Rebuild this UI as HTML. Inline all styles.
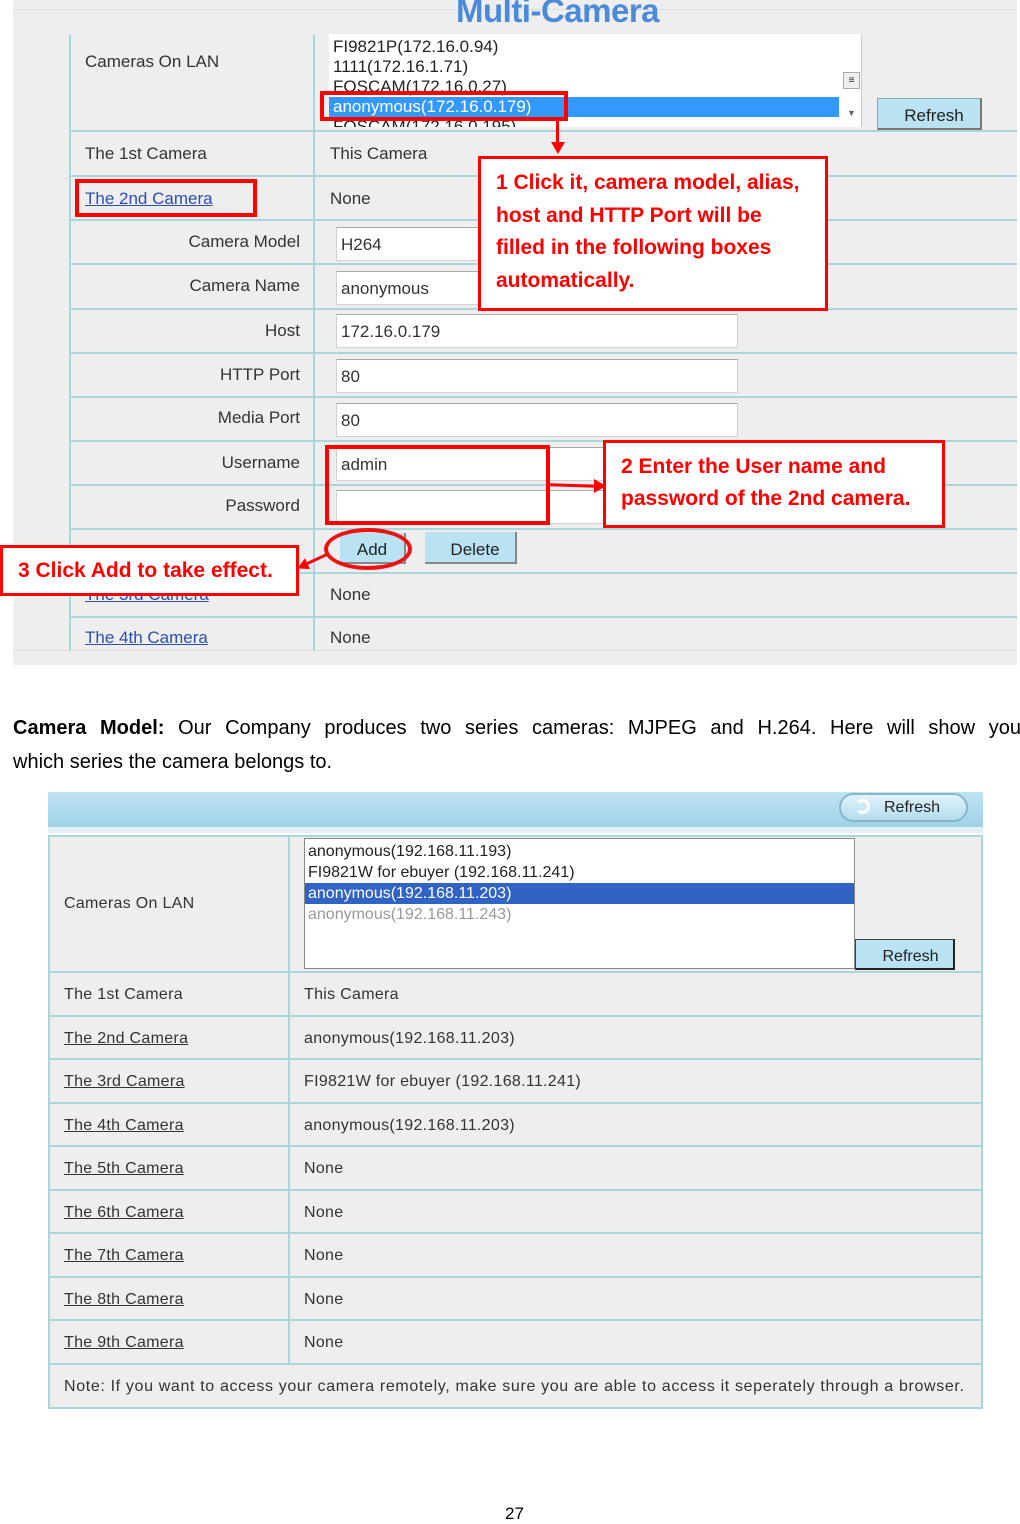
<!DOCTYPE html>
<html><head><meta charset="utf-8"><style>
*{margin:0;padding:0;box-sizing:border-box}
body{width:1020px;height:1521px;background:#fff;position:relative;overflow:hidden;font-family:"Liberation Sans",sans-serif;color:#222}
.a{position:absolute;white-space:nowrap}
.h{position:absolute;height:2px;background:#a9d5dd}
.v{position:absolute;width:2px;background:#a9d5dd}
.t{font-size:17px;color:#333}
.lk{color:#2a4fb0;text-decoration:underline}
.in{position:absolute;background:#fff;border:1px solid #d0d0d0;border-top-color:#aaa;height:34px;font-size:17px;padding:7px 4px;color:#333}
.rb{position:absolute;border:3px solid #f00;background:#fff;color:#f00;font-weight:bold;font-size:21px;line-height:32px;white-space:nowrap}
.t2{font-size:16px;color:#333;letter-spacing:0.3px}
</style></head><body>
<div class="a" style="left:13px;top:0;width:1004px;height:665px;background:#eeeeee"></div>
<div class="a" style="left:13px;top:9px;width:1004px;height:1px;background:#ddd"></div>
<div class="a" style="left:13px;top:650px;width:1004px;height:1px;background:#ddd"></div>
<div class="a" style="left:456px;top:-8px;font-size:33px;font-weight:bold;color:#4a8ad8;letter-spacing:-0.5px">Multi-Camera</div>
<div class="v" style="left:69px;top:35px;height:615px"></div>
<div class="v" style="left:313px;top:35px;height:615px"></div>
<div class="h" style="left:70px;top:130px;width:947px"></div>
<div class="h" style="left:70px;top:175px;width:947px"></div>
<div class="h" style="left:70px;top:219px;width:947px"></div>
<div class="h" style="left:70px;top:263px;width:947px"></div>
<div class="h" style="left:70px;top:308px;width:947px"></div>
<div class="h" style="left:70px;top:352px;width:947px"></div>
<div class="h" style="left:70px;top:396px;width:947px"></div>
<div class="h" style="left:70px;top:440px;width:947px"></div>
<div class="h" style="left:70px;top:484px;width:947px"></div>
<div class="h" style="left:70px;top:528px;width:947px"></div>
<div class="h" style="left:70px;top:572px;width:947px"></div>
<div class="h" style="left:70px;top:616px;width:947px"></div>
<div class="a t" style="left:85px;top:52px">Cameras On LAN</div>
<div class="a" style="left:329px;top:34px;width:533px;height:93px;background:#fff;border-right:1px solid #ccc;overflow:hidden;font-size:17px;line-height:20px;color:#222">
 <div style="padding-left:4px;margin-top:3px">FI9821P(172.16.0.94)</div>
 <div style="padding-left:4px">1111(172.16.1.71)</div>
 <div style="padding-left:4px">FOSCAM(172.16.0.27)</div>
 <div style="padding-left:4px;background:#3399ff;color:#fff;width:510px">anonymous(172.16.0.179)</div>
 <div style="padding-left:4px">FOSCAM(172.16.0.195)</div>
</div>
<div class="a" style="left:843px;top:72px;width:17px;height:17px;border:1px solid #aaa;background:#eee;font-size:10px;text-align:center;line-height:15px">≡</div>
<div class="a" style="left:847px;top:108px;font-size:9px;color:#666">▼</div>
<div class="a" style="left:877px;top:98px;width:105px;height:32px;background:#b9e3f2;border:1px solid #8aa;border-right:2px solid #777;border-bottom:2px solid #777;font-size:17px;text-align:center;line-height:34px;padding-left:10px;color:#222">Refresh</div>
<div class="rb" style="left:320px;top:91px;width:248px;height:30px;background:none;border-width:4px"></div>
<div class="a" style="left:556px;top:120px;width:3px;height:26px;background:#f00"></div>
<div class="a" style="left:551px;top:142px;width:0;height:0;border-left:7px solid transparent;border-right:7px solid transparent;border-top:12px solid #f00"></div>

<div class="a t" style="left:85px;top:144px">The 1st Camera</div>
<div class="a t" style="left:330px;top:144px">This Camera</div>
<div class="a t lk" style="left:85px;top:189px">The 2nd Camera</div>
<div class="rb" style="left:75px;top:179px;width:182px;height:38px;background:none;border-width:4px"></div>
<div class="a t" style="left:330px;top:189px">None</div>
<div class="a t" style="right:720px;top:232px">Camera Model</div>
<div class="in" style="left:336px;top:227px;width:402px">H264</div>
<div class="a t" style="right:720px;top:276px">Camera Name</div>
<div class="in" style="left:336px;top:271px;width:402px">anonymous</div>
<div class="a t" style="right:720px;top:321px">Host</div>
<div class="in" style="left:336px;top:314px;width:402px">172.16.0.179</div>
<div class="a t" style="right:720px;top:365px">HTTP Port</div>
<div class="in" style="left:336px;top:359px;width:402px">80</div>
<div class="a t" style="right:720px;top:408px">Media Port</div>
<div class="in" style="left:336px;top:403px;width:402px">80</div>
<div class="a t" style="right:720px;top:453px">Username</div>
<div class="in" style="left:336px;top:447px;width:270px">admin</div>
<div class="a t" style="right:720px;top:496px">Password</div>
<div class="in" style="left:336px;top:490px;width:270px"></div>
<div class="rb" style="left:325px;top:445px;width:225px;height:80px;background:none;border-width:4px"></div>
<div class="a" style="left:550px;top:484px;width:46px;height:3px;background:#f00;transform:rotate(2deg)"></div>
<div class="a" style="left:594px;top:479px;width:0;height:0;border-top:7px solid transparent;border-bottom:7px solid transparent;border-left:12px solid #f00"></div>
<div class="a" style="left:340px;top:533px;width:66px;height:31px;background:#b9e3f2;border-right:2px solid #888;border-bottom:2px solid #888;font-size:17px;text-align:center;line-height:33px">Add</div>
<div class="a" style="left:324px;top:528px;width:88px;height:42px;border:4px solid #e11;border-radius:50%"></div>
<div class="a" style="left:425px;top:532px;width:92px;height:32px;background:#b9e3f2;border-right:2px solid #888;border-bottom:2px solid #888;font-size:17px;text-align:center;line-height:35px;padding-left:10px">Delete</div>
<div class="a t lk" style="left:85px;top:585px">The 3rd Camera</div>
<div class="a t" style="left:330px;top:585px">None</div>
<div class="a t lk" style="left:85px;top:628px">The 4th Camera</div>
<div class="a t" style="left:330px;top:628px">None</div>

<div class="rb" style="left:478px;top:156px;width:350px;height:155px;padding:8px 0 0 15px;line-height:32.5px">1 Click it, camera model, alias,<br>host and HTTP Port will be<br>filled in the following boxes<br>automatically.</div>
<div class="rb" style="left:603px;top:440px;width:342px;height:88px;padding:8px 0 0 15px">2 Enter the User name and<br>password of the 2nd camera.</div>
<div class="rb" style="left:0;top:545px;width:299px;height:51px;padding:7px 0 0 15px">3 Click Add to take effect.</div>
<div class="a" style="left:304px;top:558px;width:24px;height:3px;background:#f00;transform:rotate(-25deg)"></div>
<div class="a" style="left:297px;top:560px;width:0;height:0;border-top:6px solid transparent;border-bottom:6px solid transparent;border-right:11px solid #f00;transform:rotate(-25deg)"></div>

<div class="a" style="left:13px;top:711px;width:1008px;font-size:20px;line-height:34px;white-space:nowrap;text-align:justify;text-align-last:justify;color:#000"><b>Camera Model:</b> Our Company produces two series cameras: MJPEG and H.264. Here will show you</div>
<div class="a" style="left:13px;top:745px;font-size:20px;line-height:34px;color:#000">which series the camera belongs to.</div>

<div class="a" style="left:48px;top:792px;width:935px;height:35px;background:linear-gradient(#bfe4f2,#9fd2e8)"></div>
<div class="a" style="left:48px;top:827px;width:935px;height:6px;background:#e4eef5"></div>
<div class="a" style="left:839px;top:793px;width:129px;height:29px;border-radius:15px;border:2px solid #88b4cc;background:linear-gradient(#e0f2fa,#b4dcee);font-size:16px;line-height:25px;padding-left:43px;color:#222">Refresh</div>
<div class="a" style="left:855px;top:799px;width:15px;height:15px;border-radius:50%;border:3px solid #fff;border-left-color:transparent"></div>
<div class="a" style="left:48px;top:835px;width:935px;height:574px;background:#eeeeee;border:2px solid #a9d5dd"></div>
<div class="v" style="left:288px;top:836px;height:528px"></div>
<div class="h" style="left:49px;top:971px;width:933px"></div>
<div class="h" style="left:49px;top:1015px;width:933px"></div>
<div class="h" style="left:49px;top:1058px;width:933px"></div>
<div class="h" style="left:49px;top:1102px;width:933px"></div>
<div class="h" style="left:49px;top:1145px;width:933px"></div>
<div class="h" style="left:49px;top:1189px;width:933px"></div>
<div class="h" style="left:49px;top:1232px;width:933px"></div>
<div class="h" style="left:49px;top:1276px;width:933px"></div>
<div class="h" style="left:49px;top:1319px;width:933px"></div>
<div class="h" style="left:49px;top:1363px;width:933px"></div>
<div class="a t2" style="left:64px;top:895px">Cameras On LAN</div>
<div class="a" style="left:304px;top:838px;width:551px;height:131px;background:#fff;border:1px solid #888;font-size:16px;line-height:21px;color:#222;padding-top:2px">
 <div style="padding-left:3px">anonymous(192.168.11.193)</div>
 <div style="padding-left:3px">FI9821W for ebuyer (192.168.11.241)</div>
 <div style="padding-left:3px;background:#3163c5;color:#fff">anonymous(192.168.11.203)</div>
 <div style="padding-left:3px;color:#999">anonymous(192.168.11.243)</div>
</div>
<div class="a" style="left:855px;top:939px;width:100px;height:31px;background:#b9e3f2;border:1px solid #444;border-right:2px solid #222;border-bottom:2px solid #222;font-size:16px;line-height:34px;text-align:center;padding-left:12px">Refresh</div>
<div class="a t2" style="left:64px;top:986px">The 1st Camera</div>
<div class="a t2" style="left:304px;top:986px">This Camera</div>
<div class="a t2 lk" style="left:64px;top:1030px">The 2nd Camera</div>
<div class="a t2" style="left:304px;top:1030px">anonymous(192.168.11.203)</div>
<div class="a t2 lk" style="left:64px;top:1073px">The 3rd Camera</div>
<div class="a t2" style="left:304px;top:1073px">FI9821W for ebuyer (192.168.11.241)</div>
<div class="a t2 lk" style="left:64px;top:1117px">The 4th Camera</div>
<div class="a t2" style="left:304px;top:1117px">anonymous(192.168.11.203)</div>
<div class="a t2 lk" style="left:64px;top:1160px">The 5th Camera</div>
<div class="a t2" style="left:304px;top:1160px">None</div>
<div class="a t2 lk" style="left:64px;top:1204px">The 6th Camera</div>
<div class="a t2" style="left:304px;top:1204px">None</div>
<div class="a t2 lk" style="left:64px;top:1247px">The 7th Camera</div>
<div class="a t2" style="left:304px;top:1247px">None</div>
<div class="a t2 lk" style="left:64px;top:1291px">The 8th Camera</div>
<div class="a t2" style="left:304px;top:1291px">None</div>
<div class="a t2 lk" style="left:64px;top:1334px">The 9th Camera</div>
<div class="a t2" style="left:304px;top:1334px">None</div>
<div class="a t2" style="left:64px;top:1378px;letter-spacing:0.65px">Note: If you want to access your camera remotely, make sure you are able to access it seperately through a browser.</div>

<div class="a" style="left:505px;top:1504px;font-size:17px;color:#000">27</div>
</body></html>
